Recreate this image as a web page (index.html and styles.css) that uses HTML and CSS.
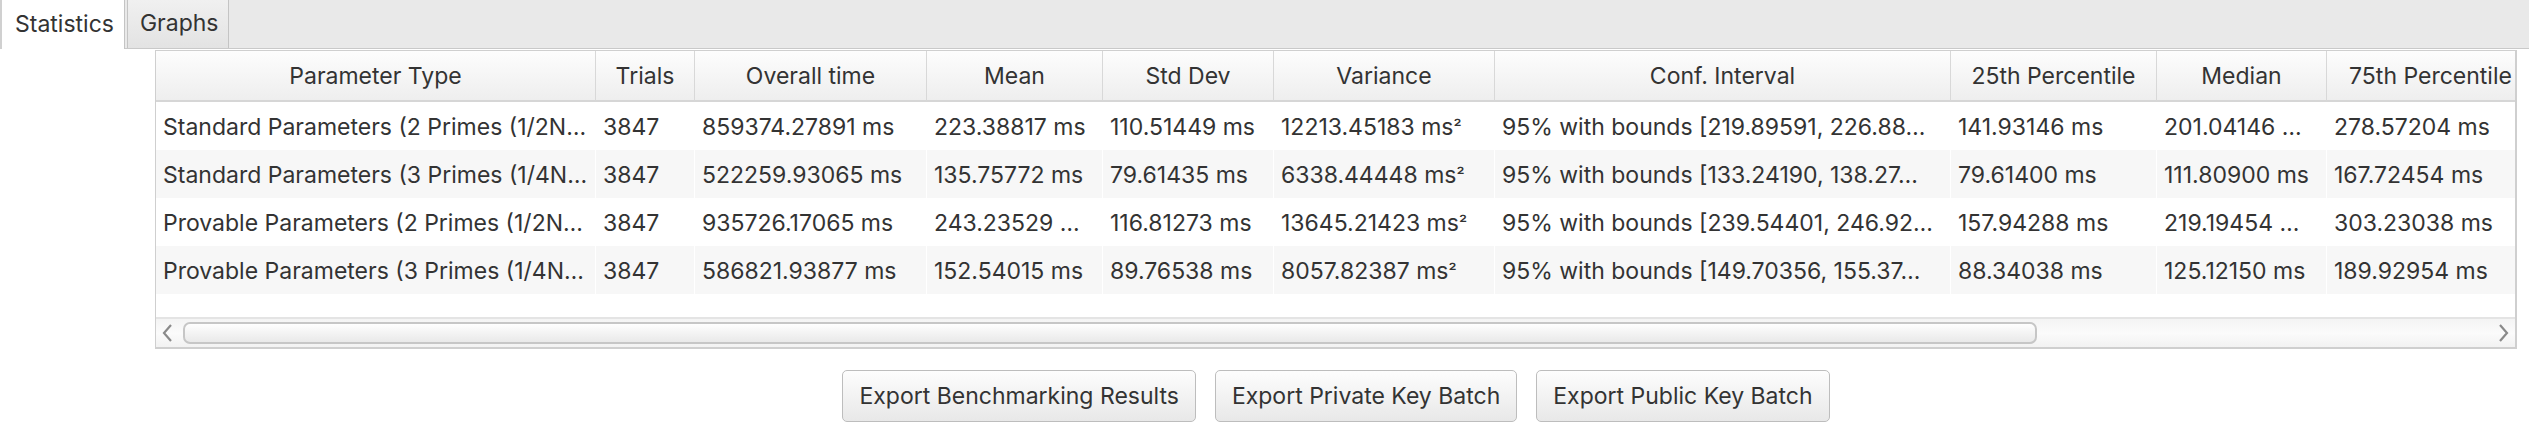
FILE: index.html
```html
<!DOCTYPE html>
<html>
<head>
<meta charset="utf-8">
<link rel="stylesheet" href="styles.css">
</head>
<body>
<div class="tabbar">
  <div class="tab tab-active">Statistics</div>
  <div class="tab">Graphs</div>
</div>
<div class="content">
  <div class="tablebox">
    <div class="viewport">
      <table class="grid">
        <colgroup>
          <col style="width:440px"><col style="width:99px"><col style="width:232px"><col style="width:176px"><col style="width:171px"><col style="width:221px"><col style="width:456px"><col style="width:206px"><col style="width:170px"><col style="width:208px">
        </colgroup>
        <thead>
          <tr>
            <th>Parameter Type</th><th>Trials</th><th>Overall time</th><th>Mean</th><th>Std Dev</th><th>Variance</th><th>Conf. Interval</th><th>25th Percentile</th><th>Median</th><th>75th Percentile</th>
          </tr>
        </thead>
        <tbody>
          <tr>
            <td>Standard Parameters (2 Primes (1/2N…</td><td>3847</td><td>859374.27891 ms</td><td>223.38817 ms</td><td>110.51449 ms</td><td>12213.45183 ms<span class="sq">²</span></td><td>95% with bounds [219.89591, 226.88…</td><td>141.93146 ms</td><td>201.04146 …</td><td>278.57204 ms</td>
          </tr>
          <tr class="alt">
            <td>Standard Parameters (3 Primes (1/4N…</td><td>3847</td><td>522259.93065 ms</td><td>135.75772 ms</td><td>79.61435 ms</td><td>6338.44448 ms<span class="sq">²</span></td><td>95% with bounds [133.24190, 138.27…</td><td>79.61400 ms</td><td>111.80900 ms</td><td>167.72454 ms</td>
          </tr>
          <tr>
            <td>Provable Parameters (2 Primes (1/2N…</td><td>3847</td><td>935726.17065 ms</td><td>243.23529 …</td><td>116.81273 ms</td><td>13645.21423 ms<span class="sq">²</span></td><td>95% with bounds [239.54401, 246.92…</td><td>157.94288 ms</td><td>219.19454 …</td><td>303.23038 ms</td>
          </tr>
          <tr class="alt">
            <td>Provable Parameters (3 Primes (1/4N…</td><td>3847</td><td>586821.93877 ms</td><td>152.54015 ms</td><td>89.76538 ms</td><td>8057.82387 ms<span class="sq">²</span></td><td>95% with bounds [149.70356, 155.37…</td><td>88.34038 ms</td><td>125.12150 ms</td><td>189.92954 ms</td>
          </tr>
        </tbody>
      </table>
    </div>
    <div class="hscroll">
      <svg class="arrow" width="12" height="20" viewBox="0 0 12 20"><path d="M10 2 L3 10 L10 18" fill="none" stroke="#8a8a8a" stroke-width="2.2"/></svg>
      <div class="track"><div class="thumb"></div></div>
      <svg class="arrow" width="12" height="20" viewBox="0 0 12 20"><path d="M2 2 L9 10 L2 18" fill="none" stroke="#8a8a8a" stroke-width="2.2"/></svg>
    </div>
  </div>
  <div class="buttons">
    <button class="btn">Export Benchmarking Results</button>
    <button class="btn">Export Private Key Batch</button>
    <button class="btn">Export Public Key Batch</button>
  </div>
</div>
</body>
</html>
```

FILE: styles.css
```css
* { box-sizing: border-box; }
html, body {
  margin: 0;
  padding: 0;
  background: #ffffff;
  font-family: Inter, "Noto Sans", "Liberation Sans", sans-serif;
  font-size: 23px;
  color: #333333;
}
.tabbar {
  display: flex;
  align-items: flex-end;
  height: 49px;
  background: #e9e9e9;
  border-bottom: 1px solid #c9c9c9;
  gap: 2px;
}
.tab {
  height: 48px;
  display: flex;
  align-items: center;
  padding: 0 10px 2px 12px;
  border: 1px solid #c4c4c4;
  border-top: none;
  border-bottom: none;
  background: linear-gradient(#f0f0f0, #e3e3e3);
  color: #333;
}
.tab-active {
  background: #ffffff;
  height: 49px;
  margin-bottom: -1px;
  padding-left: 13px;
  border-left: 2px solid #d0d0d0;
}
.content {
  margin-left: 155px;
  width: 2362px;
  padding-top: 1px;
}
.tablebox {
  border: 1px solid #cfcfcf;
  border-width: 1px 2px 2px 1px;
  background: #fff;
}
.viewport {
  overflow: hidden;
  height: 266px;
}
.grid {
  table-layout: fixed;
  border-collapse: separate;
  border-spacing: 0;
  width: 2379px;
}
.grid th {
  height: 51px;
  font-weight: normal;
  text-align: center;
  background: linear-gradient(#fdfdfd, #eeeeee);
  border-right: 1px solid #d8d8d8;
  border-bottom: 2px solid #d6d6d6;
  white-space: nowrap;
  overflow: hidden;
  padding: 0 4px;
}
.grid td {
  height: 48px;
  padding: 2px 7px 0 7px;
  white-space: nowrap;
  overflow: hidden;
  border-right: 1px solid #ffffff;
}
.grid tr.alt td {
  background: #f7f7f7;
}
.sq {
  font-size: 0.8em;
  position: relative;
  top: -1px;
}
.hscroll {
  display: flex;
  align-items: center;
  height: 30px;
  border-top: 2px solid #e4e4e4;
  background: linear-gradient(#f4f4f4, #fbfbfb 50%, #f2f2f2);
  padding: 0 5px 0 5px;
  gap: 10px;
}
.arrow { flex: none; }
.track {
  flex: 1;
  height: 100%;
  display: flex;
  align-items: center;
}
.thumb {
  width: 1854px;
  height: 22px;
  border: 2px solid #c6c6c6;
  border-radius: 7px;
  background: linear-gradient(#fefefe, #e9e9e9);
}
.buttons {
  display: flex;
  justify-content: center;
  gap: 19px;
  padding-top: 21px;
}
.btn {
  font-family: Inter, "Noto Sans", "Liberation Sans", sans-serif;
  font-size: 23px;
  color: #333;
  height: 52px;
  padding: 0 16px;
  border: 1px solid #bdbdbd;
  border-radius: 5px;
  background: linear-gradient(#fdfdfd, #e8e8e8);
}
```
